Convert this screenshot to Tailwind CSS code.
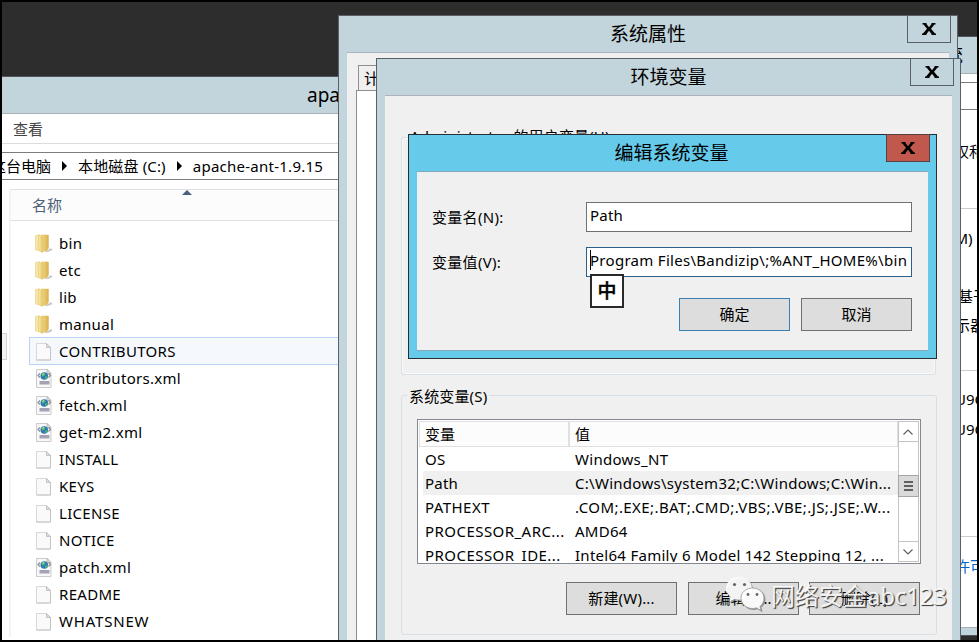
<!DOCTYPE html>
<html lang="zh-CN">
<head>
  <meta charset="UTF-8">
  <meta name="viewport" content="width=device-width, initial-scale=1.0">
  <title>环境变量</title>
  <script src="https://cdn.jsdelivr.net/npm/@tailwindcss/browser@4"></script>
</head>
<body class="w-[979px] h-[642px] overflow-hidden bg-black p-[2px] font-['Noto_Sans','Noto_Sans_CJK_SC',sans-serif] text-[15px] leading-none text-black">

  <!-- Shared icons -->
  <svg class="absolute w-0 h-0">
    <defs>
      <linearGradient id="gold" x1="0" x2="1"><stop offset="0" stop-color="#f3dc8c"/><stop offset="1" stop-color="#d9b14e"/></linearGradient>
      <linearGradient id="gold-light" x1="0" x2="1"><stop offset="0" stop-color="#f8eab0"/><stop offset="1" stop-color="#e6c767"/></linearGradient>
      <symbol id="folder" viewBox="0 0 18 20">
        <path d="M10 18l6-4 1.500 2-4.500 2z" fill="#c9c9cc"/>
        <path d="M.5 1.500l4-.8v16L.5 16z" fill="#f6e7a4" stroke="#e2c670" stroke-width=".5"/>
        <path d="M6 1l7.500 0v13l-2 3-5.500 .5z" fill="url(#gold)" stroke="#dcb95f" stroke-width=".5"/>
        <path d="M3.500 1.500L7.500 3v15.500l-4-2z" fill="url(#gold-light)" stroke="#e0c26b" stroke-width=".5"/>
      </symbol>
      <symbol id="file" viewBox="0 0 18 20">
        <path d="M1.500 1.500h10l4 4v12.500h-14z" fill="#fafafa" stroke="#d8d8d8"/>
        <path d="M15.500 5.500V18h-14" fill="none" stroke="#c4c4c4"/>
        <path d="M11.500 1.500v4h4z" fill="#e0e0e0" stroke="#b8b8b8" stroke-width=".8"/>
      </symbol>
      <symbol id="xml" viewBox="0 0 18 20">
        <path d="M1.500 .500h11l3.500 4v14h-14.500z" fill="#f8f8f8" stroke="#cccccc"/>
        <path d="M12 .500v4h4z" fill="#dedede" stroke="#b4b4b4" stroke-width=".8"/>
        <path d="M5 4.500L3 6.500l2 2M13.500 4.500l2 2-2 2" fill="none" stroke="#8c8c8c" stroke-width="1.200"/>
        <circle cx="9.300" cy="7" r="3.800" fill="#3277b8"/>
        <path d="M7 4.500q2-1.500 3 0t-1 2.500l-2 .5zM10 8l2.500-1q0 2.500-2 3.300z" fill="#4fc05c"/>
        <path d="M7.500 5.500l1.500-1" stroke="#b9e6f5"/>
        <path d="M4.500 12h10v3.500h-10z" fill="#a5a2b5"/>
      </symbol>
      <symbol id="close" viewBox="0 0 14 12">
        <path d="M.5 0h4v1L7 4.300 9.500 1V0h4v1.500h-1L9 5.800l4 4.700h1V12h-4.500v-1L7 7.700 4.500 11v1H0v-1.500h1l4-4.700L1.500 1.500h-1z"/>
      </symbol>
    </defs>
  </svg>

  <div class="relative w-[975px] h-[638px] overflow-hidden bg-[#2d2d2d]">

    <!-- Explorer window -->
    <section class="absolute left-0 top-[74px] w-[400px] h-[564px] bg-white border-t border-[#50565c]">
      <div class="h-[37px] bg-[#c3d5dc] border-b border-[#a8b0b5] pl-[305px] flex items-center text-[19px] whitespace-nowrap">apache-ant-1.9.15</div>
      <div class="h-[30px] border-b border-[#dcdcdc] pl-[11px] pt-[2px] flex items-center text-[#444]">查看</div>
      <div class="mt-2 h-7 border-y border-[#7d7d7d] flex items-center whitespace-nowrap">
        <span class="-ml-[11px]">这台电脑</span>
        <svg class="ml-[11px] w-[5px] h-[10px]" viewBox="0 0 5 10"><path d="M0 0l5 5-5 5z"/></svg>
        <span class="ml-[11px] tracking-[0.15px]">本地磁盘 (C:)</span>
        <svg class="ml-[11px] w-[5px] h-[10px]" viewBox="0 0 5 10"><path d="M0 0l5 5-5 5z"/></svg>
        <span class="ml-[11px] tracking-[0.25px]">apache-ant-1.9.15</span>
      </div>
      <div class="mt-[9px] flex">
        <div class="w-[5px] shrink-0 h-[460px] pt-[144px]">
          <div class="h-[27px] bg-[#f2f2f2] border border-l-0 border-[#d2d2d2]"></div>
        </div>
        <div class="w-1 shrink-0 h-[448px] border-r-2 border-[#f4f4f4]"></div>
        <div class="flex-1">
          <div class="relative h-8 bg-[#fcfcfc] border-y border-[#e0e0e0] pl-[21px] flex items-center text-[#4c607a]">
            名称
            <svg class="absolute left-[171px] top-0 w-[10px] h-[5px]" viewBox="0 0 10 5"><path d="M5 0l5 5H0z" fill="#47617f"/></svg>
          </div>
          <ul id="file-list" class="pt-2 pl-[18px]"></ul>
        </div>
      </div>
    </section>

    <!-- System window at the far right -->
    <section class="absolute left-[900px] top-[34px] w-[75px] h-[600px] bg-white border-t border-[#50565c] overflow-hidden whitespace-nowrap">
      <div class="h-[37px] bg-[#c3d5dc] border-b border-[#a8b0b5] pl-[23px] flex items-center text-[19px]">系统</div>
      <div class="mt-2 h-7 border-y border-[#7d7d7d]"></div>
      <div class="h-[99px] border-b border-[#ccc] pl-[52px] pt-[34px]">权和</div>
      <div class="h-[162px] border-b border-[#ccc] pt-[22px]">
        <p class="pl-[48px]">(M) i5</p>
        <p class="pl-[56px] pt-[43px]">基于 x64</p>
        <p class="pl-[53px] pt-[14px]">示器</p>
      </div>
      <div class="h-[166px] border-b border-[#ccc] pt-[21px]">
        <p class="pl-[53px]">U9C</p>
        <p class="pl-[53px] pt-[15px]">U9C</p>
      </div>
      <p class="h-[90px] pl-[53px] pt-[22px] text-[#0066cc]">许可</p>
      <div class="h-[9px] bg-[#c3d5dc] border-y border-t-[#a8b0b5] border-b-[#50565c]"></div>
    </section>

    <!-- System properties -->
    <section class="absolute left-[336px] top-[13px] w-[620px] h-[640px] border border-[#5b6066] bg-[#c3d5dc]">
      <h1 class="h-[36px] flex items-center justify-center text-[19px]">系统属性</h1>
      <div class="absolute -top-px right-[6px] w-[44px] h-[28px] border border-[#5b6066] flex items-center justify-center">
        <svg class="w-[14px] h-3"><use href="#close"/></svg>
      </div>
      <div class="mx-2 h-[600px] bg-[#f0f0f0] border-t border-[#abb4ba] pt-3 pl-[9px]">
        <div class="ml-[2px] w-20 h-[25px] border border-b-0 border-[#8c8e94] pl-[5px] flex items-center">计算机名</div>
        <div class="w-[570px] h-[560px] bg-white border border-[#8c8e94]"></div>
      </div>
    </section>

    <!-- Environment variables -->
    <section class="absolute left-[374px] top-[56px] w-[585px] h-[600px] border border-[#5b6066] bg-[#c3d5dc]">
      <h1 class="h-[36px] flex items-center justify-center text-[19px]">环境变量</h1>
      <div class="absolute -top-px right-[6px] w-[44px] h-[28px] border border-[#5b6066] flex items-center justify-center">
        <svg class="w-[14px] h-3"><use href="#close"/></svg>
      </div>
      <div class="mx-2 h-[560px] bg-[#f0f0f0] border-t border-[#abb4ba] pt-[41px] px-4">
        <fieldset class="relative h-[238px] border border-[#d5dfe5] rounded-[3px] shadow-[inset_0_0_0_1px_#fafafa]">
          <span class="absolute left-[7px] -top-[11px] bg-[#f0f0f0] px-px leading-[18px] tracking-[0.15px]">Administrator 的用户变量(U)</span>
        </fieldset>
        <fieldset class="relative mt-[20px] h-[240px] w-[536px] border border-[#d5dfe5] rounded-[3px] pt-[23px] px-[15px]">
          <span class="absolute left-[5px] -top-[9px] bg-[#f0f0f0] px-[2px] leading-[18px] tracking-[0.15px]">系统变量(S)</span>
          <div class="w-[504px] h-[145px] border border-[#828790] bg-white flex p-px overflow-hidden">
            <div class="w-[479px] shrink-0 overflow-hidden">
              <div class="h-[26px] bg-[#fcfcfc] border border-[#e0e0e0] flex">
                <div class="w-[150px] border-r-2 border-[#e0e0e0] pl-[5px] flex items-center">变量</div>
                <div class="pl-[5px] flex items-center">值</div>
              </div>
              <div id="var-list" class="pl-1"></div>
            </div>
            <div class="w-[21px] h-[141px] border border-[#c4c4c4] flex flex-col">
              <div class="h-5 border-b border-[#c4c4c4] flex items-center justify-center pr-px">
                <svg class="w-[10px] h-[6px]" viewBox="0 0 10 6" fill="none" stroke="#606060" stroke-width="1.200"><path d="M.5 5.500L5 1l4.500 4.500"/></svg>
              </div>
              <div class="-mx-px mt-[33px] h-[22px] bg-[#dadada] border border-[#a6a6a6] flex flex-col items-center justify-center gap-[2px]">
                <i class="block w-[9px] h-[2px] bg-[#606060]"></i>
                <i class="block w-[9px] h-[2px] bg-[#606060]"></i>
                <i class="block w-[9px] h-[2px] bg-[#606060]"></i>
              </div>
              <div class="mt-auto h-5 border-t border-[#c4c4c4] flex items-center justify-center pr-px">
                <svg class="w-[10px] h-[6px]" viewBox="0 0 10 6" fill="none" stroke="#606060" stroke-width="1.200"><path d="M.5 .5L5 5l4.500-4.500"/></svg>
              </div>
            </div>
          </div>
          <div class="mt-[18px] pl-[149px] flex gap-[11px]">
            <button class="w-[111px] h-[33px] bg-[#ddd] border border-[#707070] tracking-[0.2px]">新建(W)...</button>
            <button class="w-[111px] h-[33px] bg-[#ddd] border border-[#707070]">编辑(I)...</button>
            <button class="-ml-px w-[111px] h-[33px] bg-[#ddd] border border-[#707070]">删除(L)</button>
          </div>
        </fieldset>
      </div>
    </section>

    <!-- Edit system variable -->
    <section class="absolute left-[406px] top-[132px] w-[529px] h-[225px] border border-[#272d33] bg-[#66caea]">
      <h1 class="h-[36px] pr-[2px] flex items-center justify-center text-[19px]">编辑系统变量</h1>
      <div class="absolute -top-px right-[6px] w-[44px] h-[28px] bg-[#c1584d] border border-[#56403f] flex items-center justify-center">
        <svg class="w-[14px] h-3"><use href="#close"/></svg>
      </div>
      <div class="mx-2 h-[180px] bg-[#f0f0f0] border-y border-[#86a9ba] pl-[15px] pr-4 pt-[30px]">
        <div class="flex items-center">
          <label class="w-[154px] tracking-[0.3px]">变量名(N):</label>
          <div class="w-[326px] h-[30px] bg-white border border-[#707070] pl-[3px] pt-[5px] tracking-[0.2px]">Path</div>
        </div>
        <div class="mt-[15px] flex items-center">
          <label class="w-[154px] tracking-[0.3px]">变量值(V):</label>
          <div class="relative w-[326px] h-[30px] bg-white border border-[#2b5f8c] pl-[3px] pt-[5px] whitespace-nowrap">
            <span class="tracking-[0.29px]">Program Files\Bandizip\;%ANT_HOME%\bin</span>
            <i class="absolute left-[3px] top-[2px] w-px h-5 bg-black"></i>
            <div class="absolute left-[3px] top-[26px] w-[34px] h-[34px] bg-white border-2 border-[#2a2a2a] flex items-center justify-center text-[19px] font-medium [-webkit-text-stroke:0.4px_black]">中</div>
          </div>
        </div>
        <div class="mt-[21px] flex justify-end gap-[11px]">
          <button class="w-[111px] h-[33px] bg-[#ddd] border border-[#3c7fb1]">确定</button>
          <button class="w-[111px] h-[33px] bg-[#ddd] border border-[#707070]">取消</button>
        </div>
      </div>
    </section>

    <!-- Watermark -->
    <div class="absolute left-[723px] top-[578px] flex items-center whitespace-nowrap">
      <svg class="-mt-1 w-10 h-[36px] shrink-0 drop-shadow-[1px_1px_0px_#888888]" viewBox="0 0 40 36">
        <path d="M14 1C6.500 1 1 6 1 12.500c0 3.500 2 6.500 5 8.500l-1.500 4.500 5-2.500c1.500.5 3 .7 4.500.7C21 23.700 27 19 27 12.500S21.500 1 14 1z" fill="#fff" fill-opacity=".9"/>
        <path d="M27.500 12C21 12 16 16.500 16 22s5 10.500 11.500 10.500c1.500 0 3-.3 4-.7l4.500 2.700-1-4c2.500-2 4-5 4-8.500 0-5.500-5-10-11.500-10z" fill="#fff" fill-opacity=".95" stroke="#999" stroke-width=".8"/>
        <g fill="#666"><circle cx="9.500" cy="8.500" r="1.600"/><circle cx="19.500" cy="8.500" r="1.600"/><circle cx="23" cy="18.500" r="1.400"/><circle cx="32" cy="18.500" r="1.400"/></g>
      </svg>
      <span class="ml-[6px] text-[24px] text-white/90 [text-shadow:1px_1px_1px_#444,1px_1px_0_#777]">网络安全<span class="tracking-[-0.2px]">abc123</span></span>
    </div>
  </div>

  <script>
    const files = [
      ['folder', 'bin'],
      ['folder', 'etc'],
      ['folder', 'lib'],
      ['folder', 'manual'],
      ['file', 'CONTRIBUTORS'],
      ['xml', 'contributors.xml'],
      ['xml', 'fetch.xml'],
      ['xml', 'get-m2.xml'],
      ['file', 'INSTALL'],
      ['file', 'KEYS'],
      ['file', 'LICENSE'],
      ['file', 'NOTICE'],
      ['xml', 'patch.xml'],
      ['file', 'README'],
      ['file', 'WHATSNEW']
    ];
    const hovered = 'CONTRIBUTORS';
    document.getElementById('file-list').innerHTML = files.map(([icon, name]) => `
      <li class="h-[28px] -mb-px pl-[5px] pt-px border flex items-center ${name === hovered ? 'bg-[#f5f9fe] border-[#b9d3f5]' : 'border-transparent'}">
        <svg class="w-[18px] h-5 shrink-0"><use href="#${icon}"/></svg>
        <span class="ml-[6px] ${name === 'WHATSNEW' ? 'tracking-[0.8px]' : 'tracking-[0.3px]'}">${name}</span>
      </li>
    `).join('');

    const vars = [
      ['OS', 'Windows_NT'],
      ['Path', 'C:\\Windows\\system32;C:\\Windows;C:\\Win...'],
      ['PATHEXT', '.COM;.EXE;.BAT;.CMD;.VBS;.VBE;.JS;.JSE;.W...'],
      ['PROCESSOR_ARC...', 'AMD64'],
      ['PROCESSOR_IDE...', 'Intel64 Family 6 Model 142 Stepping 12, ...']
    ];
    document.getElementById('var-list').innerHTML = vars.map(([name, value]) => `
      <div class="h-6 pl-[2px] flex items-center whitespace-nowrap ${name === 'Path' ? 'bg-[#f0f0f0]' : ''}">
        <span class="w-[150px] shrink-0 ${name.length > 6 ? 'tracking-[0.45px]' : 'tracking-[0.2px]'}">${name}</span>
        <span class="${name === 'PATHEXT' ? 'tracking-[0.42px]' : 'tracking-[0.28px]'}">${value}</span>
      </div>
    `).join('');
  </script>
</body>
</html>
